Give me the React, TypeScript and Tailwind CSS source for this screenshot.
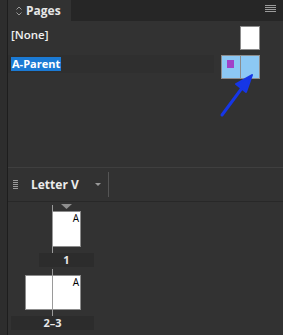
import React from "react";

const PageThumb = ({ wide, label }: { wide?: boolean; label: string }) => {
  return (
    <div className="flex flex-col">
      <div className="relative flex">
        <div className={wide ? "ml-[17px] w-[56px] h-[35px] bg-white border border-[#8c8c8c] flex justify-end" : "ml-[44px] w-[29px] h-[36px] bg-white border border-[#8c8c8c] flex justify-end"}>
          <span className="text-[10px] leading-none text-black pr-[1px] pt-[1px]">A</span>
        </div>
        <div className="absolute left-[44px] top-[-6px] bottom-[-6px] w-px bg-[#9a9a9a]" />
      </div>
      <div className={wide ? "mt-[6px] ml-[3px] w-[83px] h-[14px] bg-[#2c2c2c] flex items-center justify-center text-[11px] font-bold text-[#e8e8e8]" : "mt-[6px] ml-[31px] w-[55px] h-[14px] bg-[#2c2c2c] flex items-center justify-center text-[11px] font-bold text-[#e8e8e8]"}>
        {label}
      </div>
    </div>
  );
};

const App = () => {
  return (
    <div className="w-[283px] h-[335px] flex overflow-hidden bg-[#323232] font-['Open_Sans',sans-serif] relative">
      <div className="w-[8px] bg-[#2d2d2d] border-r border-[#1d1d1d]" />
      <div className="flex-1 flex flex-col">
        {/* tab bar */}
        <div className="h-[21px] bg-[#262626] flex items-stretch justify-between">
          <div className="w-[63px] bg-[#323232] flex items-center gap-[4px] pl-[8px]">
            <svg width="6" height="10" viewBox="0 0 6 10" className="text-[#9a9a9a]">
              <path d="M0.5 3.5 L3 1 L5.5 3.5 M0.5 6.5 L3 9 L5.5 6.5" fill="none" stroke="currentColor" strokeWidth="1" />
            </svg>
            <span className="text-[12px] font-bold text-[#e6e6e6] leading-none">Pages</span>
          </div>
          <div className="flex flex-col gap-[1px] pt-[5px] pr-[7px]">
            <div className="w-[11px] h-px bg-[#9c9c9c]" />
            <div className="w-[11px] h-px bg-[#9c9c9c]" />
            <div className="w-[11px] h-px bg-[#9c9c9c]" />
            <div className="w-[11px] h-px bg-[#9c9c9c]" />
          </div>
        </div>

        {/* parents list */}
        <div className="h-[146px] flex flex-col pt-[5px]">
          <div className="h-[24px] flex items-start justify-between pl-[3px] pr-[23px]">
            <span className="mt-[3px] text-[11.5px] font-semibold text-[#f0f0f0] leading-[12px]">[None]</span>
            <div className="w-[20px] h-[24px] bg-white border border-[#8c8c8c]" />
          </div>
          <div className="mt-[5px] h-[24px] flex items-start justify-between pr-[23px]">
            <div className="w-[206px] h-[18px] bg-[#2f2f2f] flex items-start pl-[3px] pt-[2px]">
              <span className="text-[11px] font-bold text-white bg-[#1b7ad4] leading-[14px] px-[1px]">A-Parent</span>
            </div>
            <div className="flex">
              <div className="w-[20px] h-[24px] bg-[#8cc8f4] border border-[#8c8c8c] pl-[5px] pt-[4px]">
                <div className="w-[7px] h-[8px] bg-[#a042c8]" />
              </div>
              <div className="w-[19px] h-[24px] bg-[#8cc8f4] border border-l-0 border-[#8c8c8c]" />
            </div>
          </div>
        </div>

        {/* toolbar */}
        <div className="h-[35px] border-t border-[#3f3f3f] border-b border-b-[#282828] flex items-center">
          <div className="ml-[5px] flex flex-col gap-[1px]">
            <div className="w-[5px] h-px bg-[#9a9a9a]" />
            <div className="w-[5px] h-px bg-[#9a9a9a]" />
            <div className="w-[5px] h-px bg-[#9a9a9a]" />
            <div className="w-[5px] h-px bg-[#9a9a9a]" />
            <div className="w-[5px] h-px bg-[#9a9a9a]" />
          </div>
          <span className="ml-[13px] text-[12px] font-bold text-[#ececec] leading-none">Letter V</span>
          <svg width="6" height="3" viewBox="0 0 6 3" className="ml-[16px]">
            <path d="M0 0 L6 0 L3 3 Z" fill="#9a9a9a" />
          </svg>
          <div className="ml-[7px] w-px h-[25px] bg-[#555555]" />
        </div>

        {/* pages */}
        <div className="flex-1 flex flex-col">
          <div className="mt-[2px] ml-[53px] w-[11px] h-[5px] flex justify-center">
            <svg width="11" height="5" viewBox="0 0 11 5">
              <path d="M0 0 L11 0 L5.5 5 Z" fill="#8e8e8e" />
            </svg>
          </div>
          <div className="mt-[2px]">
            <PageThumb label="1" />
          </div>
          <div className="mt-[8px]">
            <PageThumb wide label="2–3" />
          </div>
        </div>
      </div>

      {/* annotation arrow */}
      <svg className="absolute left-[215px] top-[72px]" width="45" height="48" viewBox="0 0 45 48">
        <path d="M7 43 L27 16" stroke="#1636e6" strokeWidth="3" strokeLinecap="round" />
        <path d="M37 3 L21 12 L31 20 Z" fill="#1636e6" stroke="#1636e6" strokeWidth="2" strokeLinejoin="round" />
      </svg>
    </div>
  );
};

export default App;
